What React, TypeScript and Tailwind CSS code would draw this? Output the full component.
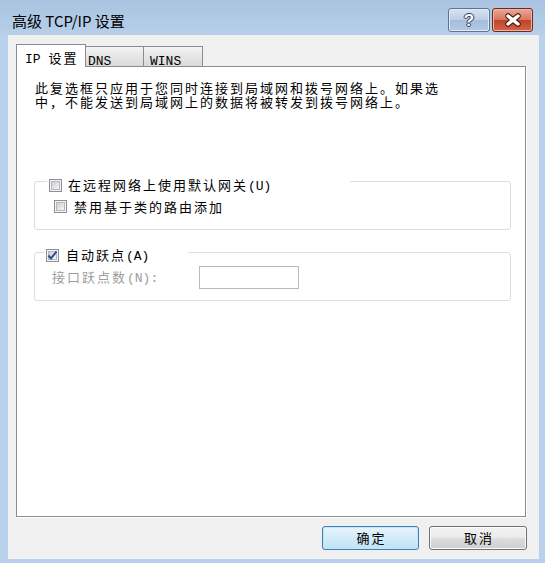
import React from "react";

function Latin({ children }: { children: React.ReactNode }) {
  return (
    <span className="font-['Liberation_Mono',monospace] text-[13px] tracking-normal">
      {children}
    </span>
  );
}

function Check({ checked }: { checked?: boolean }) {
  return (
    <span className="relative flex h-[13px] w-[13px] shrink-0 items-center justify-center border border-[#8e8f8f] bg-[#f4f4f4]">
      <span className="h-[9px] w-[9px] border border-[#b4b8be] bg-[linear-gradient(135deg,#cdd0d4,#f4f4f5)]" />
      {checked && (
        <svg
          className="absolute left-[0px] top-[0px]"
          width="11"
          height="11"
          viewBox="0 0 11 11"
        >
          <path
            d="M1.5 5.5 L4 8.5 L9.5 1.5"
            fill="none"
            stroke="#2d4c8e"
            strokeWidth="2"
          />
        </svg>
      )}
    </span>
  );
}

function Button({ label, primary }: { label: string; primary?: boolean }) {
  return (
    <div
      className={
        primary
          ? "flex h-[24px] w-[97px] items-center justify-center rounded-[3px] border border-[#3c7fb1] bg-[linear-gradient(to_bottom,#e8f5fc,#d2ecf9_50%,#c0e3f6)] pl-[2px] shadow-[inset_0_0_0_1px_#c2e7fb]"
          : "flex h-[24px] w-[98px] items-center justify-center rounded-[3px] border border-[#707070] bg-[linear-gradient(to_bottom,#f2f2f2,#ebebeb_50%,#dddddd_50%,#cfcfcf)] pl-[2px] shadow-[inset_0_0_0_1px_#fcfcfc]"
      }
    >
      {label}
    </div>
  );
}

export default function App() {
  return (
    <div className="flex h-[563px] w-[545px] flex-col overflow-hidden bg-[#b9d1ea] font-['Noto_Sans_CJK_SC',sans-serif] text-black">
      {/* title bar */}
      <div className="flex h-[35px] items-start bg-[linear-gradient(to_bottom,#a9c3e0,#b7cfe9)] pl-[12px] pr-[12px]">
        <div className="mt-[10px] text-[15px] leading-[22px]">高级 TCP/IP 设置</div>
        <div className="ml-auto mt-[8px] flex gap-[2px]">
          <div className="flex h-[24px] w-[42px] items-center justify-center rounded-[3px] border border-[#5f7390] bg-[linear-gradient(to_bottom,#d5e3f2,#bccfe6_48%,#a6bedd_52%,#b3c9e4)] shadow-[inset_0_0_0_1px_#e1ebf6]">
            <span className="font-['Liberation_Sans',sans-serif] text-[17px] font-bold leading-none text-white [text-shadow:0_0_1px_#2f3f5a,1px_0_0_#2f3f5a,-1px_0_0_#2f3f5a,0_1px_0_#2f3f5a,0_-1px_0_#2f3f5a]">
              ?
            </span>
          </div>
          <div className="flex h-[24px] w-[41px] items-center justify-center rounded-[3px] border border-[#6b2a1d] bg-[linear-gradient(to_bottom,#e9a797,#d8775f_48%,#c2432b_52%,#d1654a)] shadow-[inset_0_0_0_1px_#eeb5a6]">
            <svg width="18" height="14" viewBox="0 0 18 14">
              <path d="M4 3 L14 11 M14 3 L4 11" stroke="#4a1a10" strokeWidth="5.5" strokeLinecap="round" />
              <path d="M4 3 L14 11 M14 3 L4 11" stroke="#ffffff" strokeWidth="3.5" strokeLinecap="round" />
            </svg>
          </div>
        </div>
      </div>

      {/* client area */}
      <div className="ml-[8px] flex h-[524px] w-[531px] flex-col bg-[#f0f0f0] text-[13px] tracking-[2px]">
        {/* tabs */}
        <div className="ml-[8px] mt-[9px] flex h-[22px] items-end">
          <div className="relative z-10 mb-[-1px] h-[23px] w-[70px] overflow-hidden whitespace-nowrap border border-b-0 border-[#898c95] bg-white pl-[8px] pt-[6px] leading-[13px]">
            <Latin>IP </Latin>设置
          </div>
          <div className="h-[20px] w-[58px] whitespace-nowrap border-r border-t border-[#898c95] bg-[linear-gradient(to_bottom,#f4f4f4,#e6e6e6_50%,#d9d9d9)] pl-[2px] pt-[6px] leading-[13px]">
            <Latin>DNS</Latin>
          </div>
          <div className="h-[20px] w-[59px] whitespace-nowrap border-r border-t border-[#898c95] bg-[linear-gradient(to_bottom,#f4f4f4,#e6e6e6_50%,#d9d9d9)] pl-[6px] pt-[6px] leading-[13px]">
            <Latin>WINS</Latin>
          </div>
        </div>

        {/* tab panel */}
        <div className="ml-[8px] h-[451px] w-[510px] border border-[#898c95] bg-white shadow-[1px_1px_0_#ffffff]">
          <div className="pl-[18px] pt-[14px] leading-[14px]">
            <div>此复选框只应用于您同时连接到局域网和拨号网络上。如果选</div>
            <div>中，不能发送到局域网上的数据将被转发到拨号网络上。</div>
          </div>

          <div className="relative ml-[17px] mt-[72px] h-[49px] w-[477px] rounded-[3px] border border-[#d5dfe5]">
            <div className="absolute left-[12px] top-[-4px] flex h-[15px] w-[303px] items-center bg-white pl-[2px] leading-[13px]">
              <Check />
              <span className="ml-[6px]">
                在远程网络上使用默认网关<Latin>(U)</Latin>
              </span>
            </div>
            <div className="flex items-center pl-[19px] pt-[18px] leading-[13px]">
              <Check />
              <span className="ml-[7px]">禁用基于类的路由添加</span>
            </div>
          </div>

          <div className="relative ml-[17px] mt-[22px] h-[49px] w-[477px] rounded-[3px] border border-[#d5dfe5]">
            <div className="absolute left-[10px] top-[-5px] flex h-[15px] w-[143px] items-center bg-white pl-[1px] leading-[13px]">
              <Check checked />
              <span className="ml-[7px]">
                自动跃点<Latin>(A)</Latin>
              </span>
            </div>
            <div className="flex items-center pl-[17px] pt-[13px] leading-[13px]">
              <span className="w-[147px] text-[#9d9d9d]">
                接口跃点数<Latin>(N):</Latin>
              </span>
              <div className="h-[23px] w-[100px] border border-[#b7b9bd] bg-white" />
            </div>
          </div>
        </div>

        {/* buttons */}
        <div className="flex justify-end gap-[10px] pr-[12px] pt-[9px]">
          <Button label="确定" primary />
          <Button label="取消" />
        </div>
      </div>
    </div>
  );
}
